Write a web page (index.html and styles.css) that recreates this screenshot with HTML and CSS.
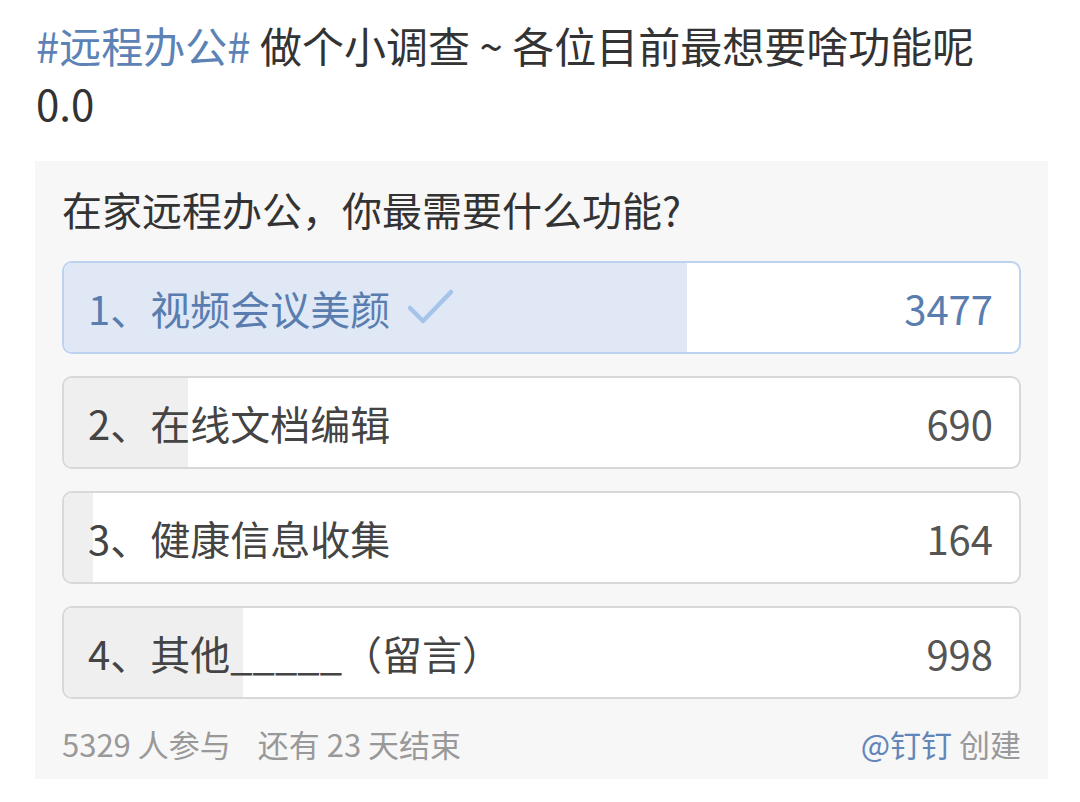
FILE: index.html
```html
<!DOCTYPE html>
<html lang="zh-CN">
<head>
    <meta charset="UTF-8">
    <title>在家远程办公投票</title>
    <link rel="stylesheet" href="styles.css">
</head>
<body>

<div class="post">
    <p class="post-title"><span class="topic">#远程办公#</span> 做个小调查 ~ 各位目前最想要啥功能呢0.0</p>

    <div class="vote-card">
        <div class="vote-question">在家远程办公，你最需要什么功能?</div>

        <div class="vote-options">
            <div class="vote-option voted">
                <div class="vote-bar" style="width: 65.25%"></div>
                <span class="vote-label">1、视频会议美颜
                    <svg class="vote-check" width="50" height="40" viewBox="0 0 50 40">
                        <polyline points="4,20 17,33 45,4" fill="none" stroke="#a6c4ea" stroke-width="4.5" stroke-linecap="round" stroke-linejoin="round"/>
                    </svg>
                </span>
                <span class="vote-count">3477</span>
            </div>
            <div class="vote-option">
                <div class="vote-bar" style="width: 12.95%"></div>
                <span class="vote-label">2、在线文档编辑</span>
                <span class="vote-count">690</span>
            </div>
            <div class="vote-option">
                <div class="vote-bar" style="width: 3.08%"></div>
                <span class="vote-label">3、健康信息收集</span>
                <span class="vote-count">164</span>
            </div>
            <div class="vote-option">
                <div class="vote-bar" style="width: 18.73%"></div>
                <span class="vote-label">4、其他_____（留言）</span>
                <span class="vote-count">998</span>
            </div>
        </div>

        <div class="vote-footer">
            <div class="vote-stats">
                <span>5329 人参与</span>
                <span>还有 23 天结束</span>
            </div>
            <div><span class="author">@钉钉</span> 创建</div>
        </div>
    </div>
</div>

</body>
</html>
```

FILE: styles.css
```css
body {
    margin: 0;
    background: #ffffff;
    color: #333333;
    font-family: "Noto Sans CJK SC", "Noto Sans", sans-serif;
}

.post {
    padding: 16px 32px 0 36px;
}

.post-title {
    margin: 0;
    max-width: 990px;
    font-size: 42px;
    line-height: 58px;
    color: #333333;
}

.topic {
    color: #5d82b6;
}

.vote-card {
    margin-top: 29px;
    margin-left: -1px;
    width: 1013px;
    box-sizing: border-box;
    background: #f7f7f7;
    padding: 22px 27px 15px 27px;
}

.vote-question {
    font-size: 40px;
    line-height: 52px;
    color: #333333;
}

.vote-options {
    margin-top: 26px;
    display: flex;
    flex-direction: column;
    gap: 22px;
}

.vote-option {
    position: relative;
    height: 93px;
    box-sizing: border-box;
    border: 2px solid #d8d8d8;
    border-radius: 10px;
    background: #ffffff;
    overflow: hidden;
    display: flex;
    align-items: center;
    justify-content: space-between;
    padding: 0 26px 0 24px;
}

.vote-bar {
    position: absolute;
    left: 0;
    top: 0;
    bottom: 0;
    background: #efefef;
}

.vote-option.voted {
    border-color: #bcd2ee;
}

.vote-option.voted .vote-bar {
    background: #dfe8f4;
}

.vote-label,
.vote-count {
    position: relative;
    font-size: 40px;
    color: #444444;
}

.vote-label {
    display: flex;
    align-items: center;
}

.vote-count {
    color: #555555;
}

.voted .vote-label,
.voted .vote-count {
    color: #5a7db0;
}

.vote-check {
    margin-left: 16px;
}

.vote-footer {
    margin-top: 25px;
    display: flex;
    justify-content: space-between;
    font-size: 31px;
    line-height: 40px;
    color: #999999;
}

.vote-stats {
    display: flex;
    gap: 27px;
}

.author {
    color: #6286b9;
}
```
